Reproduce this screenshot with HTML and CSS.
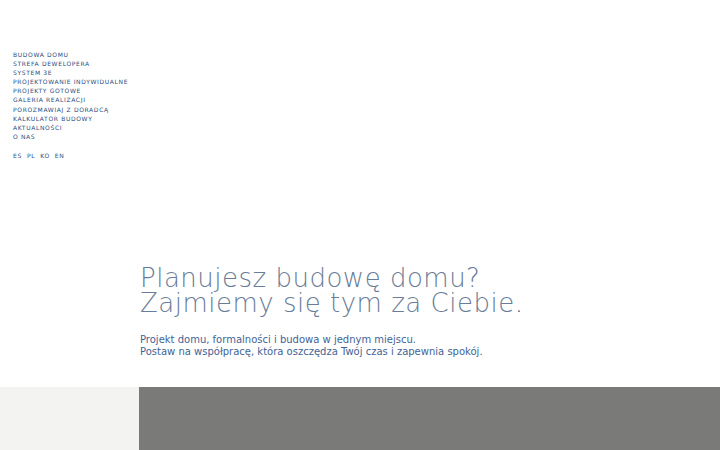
FILE: index.html
```html
<!DOCTYPE html>
<html lang="pl">
<head>
<meta charset="utf-8">
<link rel="stylesheet" href="styles.css">
</head>
<body>
<div class="page">
  <header class="top">
    <nav class="menu">
      <a href="#">Budowa domu</a>
      <a href="#">Strefa dewelopera</a>
      <a href="#">System 3E</a>
      <a href="#">Projektowanie indywidualne</a>
      <a href="#">Projekty gotowe</a>
      <a href="#">Galeria realizacji</a>
      <a href="#">Porozmawiaj z doradcą</a>
      <a href="#">Kalkulator budowy</a>
      <a href="#">Aktualności</a>
      <a href="#">O nas</a>
    </nav>
    <div class="langs"><a href="#">ES</a><a href="#">PL</a><a href="#">KO</a><a href="#">EN</a></div>
  </header>
  <section class="hero">
    <h1 class="title">Planujesz budowę domu?<br>Zajmiemy się tym za Ciebie<span class="dot">.</span></h1>
    <p class="lead">Projekt domu, formalności i budowa w jednym miejscu.<br>Postaw na współpracę, która oszczędza Twój czas i zapewnia spokój.</p>
  </section>
  <section class="band">
    <div class="band-side"></div>
    <div class="band-main"></div>
  </section>
</div>
</body>
</html>
```
FILE: styles.css
```css
html, body { margin: 0; padding: 0; background: #fff; }
body { font-family: "DejaVu Sans", "Liberation Sans", sans-serif; overflow: hidden; }
.page { width: 720px; height: 450px; display: flex; flex-direction: column; }
.top { padding: 50px 0 0 13px; height: 210px; box-sizing: border-box; }
.menu { display: flex; flex-direction: column; }
.menu a, .langs a {
  color: #2c4c7e; text-decoration: none; text-transform: uppercase;
  font-size: 6px; line-height: 9.1px; letter-spacing: 0.65px;
}
.langs { margin-top: 10px; display: flex; gap: 5px; }
.hero { padding: 56px 0 0 140px; height: 177px; box-sizing: border-box; }
.title {
  margin: 0; font-weight: 200; font-size: 26px; line-height: 25px;
  color: #6a7d98; letter-spacing: 0.5px;
}
.title .dot { color: #2f4f80; }
.lead {
  margin: 18px 0 0; font-size: 10px; line-height: 12px; color: #3f6396; font-weight: 400;
}
.band { flex: 1; display: flex; }
.band-side { width: 139px; background: #f3f3f1; }
.band-main { flex: 1; background: #7a7a78; }
```
